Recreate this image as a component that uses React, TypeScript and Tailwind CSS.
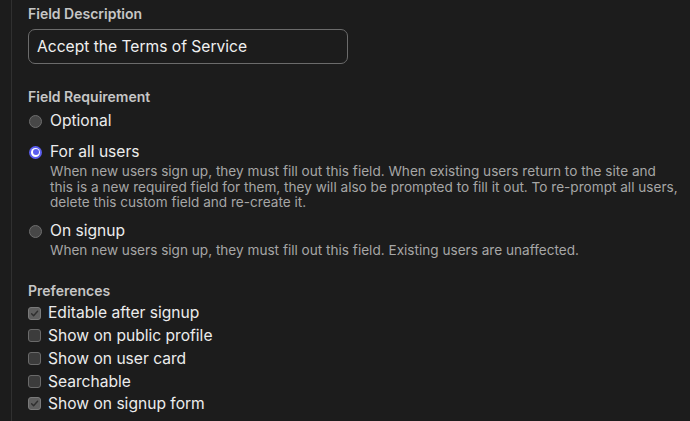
import React from "react";

function Radio({ checked }: { checked?: boolean }) {
  if (checked) {
    return (
      <span className="flex h-[13px] w-[13px] shrink-0 items-center justify-center rounded-full bg-[#5b5ef0]">
        <span className="flex h-[9px] w-[9px] items-center justify-center rounded-full bg-white">
          <span className="h-[6px] w-[6px] rounded-full bg-[#5b5ef0]" />
        </span>
      </span>
    );
  }
  return <span className="h-[13px] w-[13px] shrink-0 rounded-full border border-[#6e6e6e] bg-[#474747]" />;
}

function Checkbox({ checked }: { checked?: boolean }) {
  return (
    <span
      className={
        "flex h-[13px] w-[13px] shrink-0 items-center justify-center rounded-[3px] border " +
        (checked ? "border-[#7a7a7a] bg-[#5f5f5f]" : "border-[#6a6a6a] bg-[#3c3c3c]")
      }
    >
      {checked && (
        <svg width="9" height="9" viewBox="0 0 10 10" fill="none">
          <path d="M1.8 5.2 L4 7.4 L8.4 2.4" stroke="#2f2f2f" strokeWidth="1.6" strokeLinecap="round" strokeLinejoin="round" />
        </svg>
      )}
    </span>
  );
}

export default function App() {
  const prefs: [string, boolean][] = [
    ["Editable after signup", true],
    ["Show on public profile", false],
    ["Show on user card", false],
    ["Searchable", false],
    ["Show on signup form", true],
  ];
  return (
    <div className="min-h-screen bg-[#1c1c1c] text-[#ececec]" style={{ fontFamily: "Inter, 'Noto Sans', sans-serif" }}>
      <div className="ml-[11px] min-h-[421px] border-l border-[#303030] pl-[16px] pt-[5px]">
        <div className="text-[14px] font-semibold leading-[18px] text-[#c6c6c6]">Field Description</div>
        <div className="mt-[6px] flex h-[35px] w-[320px] items-center rounded-[7px] border border-[#6b6b6b] px-[8px] text-[15.6px] text-[#f0f0f0]">
          Accept the Terms of Service
        </div>

        <div className="mt-[24px] text-[14px] font-semibold leading-[18px] text-[#c6c6c6]">Field Requirement</div>
        <div className="mt-[4px] flex items-center gap-[8px] pl-[1px] text-[15.6px] leading-[22px]">
          <Radio />
          <span>Optional</span>
        </div>

        <div className="mt-[9px] flex items-center gap-[8px] pl-[1px] text-[15.6px] leading-[22px]">
          <Radio checked />
          <span>For all users</span>
        </div>
        <div className="mt-[1px] pl-[22px] text-[13.6px] leading-[15.7px] text-[#a6a6a6]">
          When new users sign up, they must fill out this field. When existing users return to the site and
          <br />
          this is a new required field for them, they will also be prompted to fill it out. To re-prompt all users,
          <br />
          delete this custom field and re-create it.
        </div>

        <div className="mt-[9px] flex items-center gap-[8px] pl-[1px] text-[15.6px] leading-[22px]">
          <Radio />
          <span>On signup</span>
        </div>
        <div className="mt-[1px] pl-[22px] text-[13.6px] leading-[15.7px] text-[#a6a6a6]">
          When new users sign up, they must fill out this field. Existing users are unaffected.
        </div>

        <div className="mt-[23px] text-[14px] font-semibold leading-[18px] text-[#c6c6c6]">Preferences</div>
        <div className="mt-[2px] flex flex-col">
          {prefs.map(([label, checked]) => (
            <div key={label} className="flex h-[22.7px] items-center gap-[7px] text-[15.6px]">
              <Checkbox checked={checked} />
              <span>{label}</span>
            </div>
          ))}
        </div>
      </div>
    </div>
  );
}
